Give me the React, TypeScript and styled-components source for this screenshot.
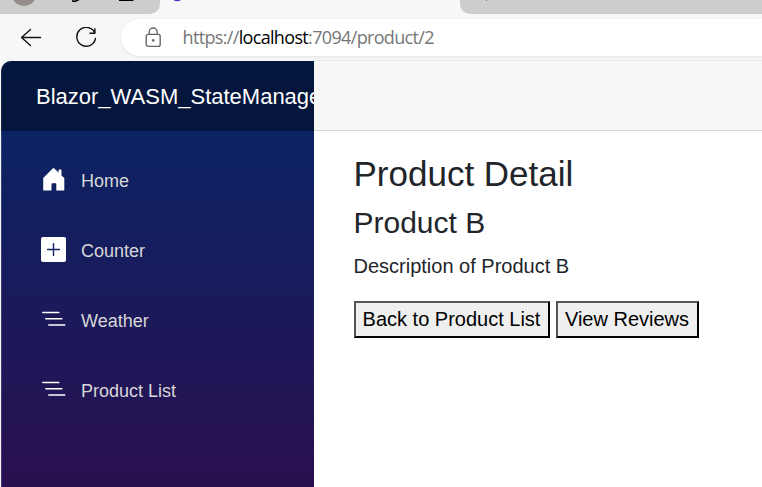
import React from 'react';
import styled, { createGlobalStyle } from 'styled-components';

const GlobalStyle = createGlobalStyle`
  * { box-sizing: border-box; }
  html, body { margin: 0; background: #f7f7f7; overflow: hidden; }
  body { font-family: 'Liberation Sans', Arial, sans-serif; color: #212529; }
`;

const Window = styled.div`
  width: 762px;
  height: 487px;
  display: flex;
  flex-direction: column;
  overflow: hidden;
`;

const TabStrip = styled.div`
  height: 14px;
  flex: none;
  display: flex;
  background: #f7f7f7;
`;

const TabActions = styled.div`
  width: 160px;
  background: #cdcdcd;
  border-bottom-right-radius: 10px;
  svg { display: block; }
`;

const ActiveTab = styled.div`
  width: 300px;
  svg { display: block; }
`;

const InactiveTab = styled.div`
  flex: 1;
  background: #cdcdcd;
  border-bottom-left-radius: 10px;
  svg { display: block; }
`;

const Toolbar = styled.div`
  height: 47px;
  flex: none;
  display: flex;
  align-items: flex-start;
  padding: 5px 0 0 20px;
  background: #f7f7f7;
`;

const ToolButton = styled.span<{ $gap: number }>`
  display: flex;
  width: 22px;
  height: 37px;
  align-items: center;
  margin-right: ${(p) => p.$gap}px;
  svg { display: block; flex: none; }
`;

const AddressBar = styled.div`
  flex: 1;
  height: 37px;
  display: flex;
  align-items: center;
  padding-left: 24px;
  background: #fff;
  border-radius: 19px 0 0 19px;
  box-shadow: 0 1px 3px rgba(0, 0, 0, 0.09);
  svg { display: block; flex: none; }
`;

const Url = styled.span`
  margin: -1px 0 0 19.5px;
  font: 400 18px/24px 'Open Sans', 'Noto Sans', sans-serif;
  letter-spacing: -0.66px;
  color: #767676;
  white-space: nowrap;
  b { font-weight: 400; color: #000; }
`;

const Page = styled.div`
  flex: 1;
  display: flex;
  min-height: 0;
  padding-left: 1px;
`;

const Sidebar = styled.aside`
  width: 313px;
  flex: none;
  overflow: hidden;
  border-top-left-radius: 10px;
  background: linear-gradient(180deg, rgb(5, 39, 103) 0, #3a0647 610px);
  box-shadow: inset 1px 0 rgba(255, 255, 255, 0.15);
`;

const Brand = styled.div`
  height: 70px;
  padding-left: 35px;
  background: rgba(0, 0, 0, 0.4);
  color: #fff;
  font-size: 22px;
  line-height: 72px;
  white-space: nowrap;
`;

const Nav = styled.nav`
  padding: 20px 0 0 40px;
`;

const NavItem = styled.a`
  height: 60px;
  margin-bottom: 10px;
  display: flex;
  align-items: center;
  gap: 15px;
  color: #d7d7d7;
  font-size: 18px;
  svg { display: block; flex: none; margin-bottom: 3px; color: #fff; }
`;

const Main = styled.main`
  flex: 1;
  background: #fff;
`;

const TopRow = styled.div`
  height: 70px;
  background: #f7f7f7;
  border-bottom: 1px solid #d6d5d5;
  box-shadow: 0 -1px #eaeaea;
`;

const Article = styled.article`
  padding: 22px 0 0 39.5px;
`;

const Title = styled.h1`
  margin: 0 0 10px;
  font-size: 35px;
  font-weight: 400;
  line-height: 42px;
`;

const Subtitle = styled.h3`
  margin: 0 0 10px;
  font-size: 30px;
  font-weight: 400;
  line-height: 36px;
`;

const Description = styled.p`
  margin: 0 0 20px;
  font-size: 20px;
  line-height: 30px;
`;

const Actions = styled.div`
  display: flex;
  gap: 6px;
`;

const Button = styled.button<{ $width: number }>`
  width: ${(p) => p.$width}px;
  height: 37px;
  padding: 0 0 2px;
  border: 2px solid;
  border-color: #555 #000 #000 #555;
  background: #efefef;
  color: #000;
  font: 20px/30px 'Liberation Sans', Arial, sans-serif;
  white-space: nowrap;
`;

const HomeIcon = () => (
  <svg width="25" height="25" viewBox="0 0 25 25" fill="currentColor">
    <path d="M12 1.3q.5-.4 1 0L17.6 5.4V3.2q0-.6.6-.6h1.7q.6 0 .6.6v5.2l2.8 2.6V22.9q0 .7-.7.7h-6.8q-.5 0-.5-.6v-6q0-.8-.8-.8h-3.2q-.8 0-.8.8v6q0 .6-.5.6H2.9q-.7 0-.7-.7V11Z" />
  </svg>
);

const PlusIcon = () => (
  <svg width="25" height="25" viewBox="0 0 25 25">
    <rect width="25" height="25" rx="2" fill="currentColor" />
    <path d="M12.5 6.6v11.8M6.6 12.5h11.8" stroke="#152060" strokeWidth="1.4" strokeLinecap="round" />
  </svg>
);

const ListIcon = () => (
  <svg width="25" height="25" viewBox="0 0 25 25" fill="none" stroke="currentColor" strokeWidth="1.5" strokeLinecap="round">
    <path d="M1.8 5.4H17.8M4.8 11.8H20.8M7.8 18H23.8" />
  </svg>
);

const App = () => (
  <Window>
    <GlobalStyle />
    <TabStrip>
      <TabActions>
        <svg width="160" height="14" fill="none">
          <ellipse cx="24" cy="-3" rx="11" ry="9" fill="#928d8a" />
          <path d="M73 0v1.2h2.5L80-1" stroke="#000" strokeWidth="1.5" />
          <path d="M119 0h14.5" stroke="#000" strokeWidth="2" />
        </svg>
      </TabActions>
      <ActiveTab>
        <svg width="40" height="14">
          <circle cx="17.3" cy="-5" r="6.2" fill="#512bd4" />
        </svg>
      </ActiveTab>
      <InactiveTab>
        <svg width="40" height="14">
          <path d="M26.5 0v1" stroke="#777" />
        </svg>
      </InactiveTab>
    </TabStrip>
    <Toolbar>
      <ToolButton $gap={34}>
        <svg width="22" height="22" viewBox="0 0 22 22" fill="none" stroke="#111" strokeWidth="1.35" strokeLinecap="round" strokeLinejoin="round">
          <path d="M20.5 10.5H1.5M10.5 2.5l-9 8 9 8" />
        </svg>
      </ToolButton>
      <ToolButton $gap={23}>
        <svg width="22" height="22" viewBox="0 0 22 22" fill="none" stroke="#111" strokeWidth="1.4" strokeLinecap="round" strokeLinejoin="round">
          <path d="M18.9 6.2A9.4 9.4 0 1 0 19.5 11.4M18.9 1.7V6.2H14" />
        </svg>
      </ToolButton>
      <AddressBar>
        <svg width="18" height="22" viewBox="0 0 18 22" fill="none" stroke="#666" strokeWidth="1.4">
          <rect x="1.2" y="7.4" width="14" height="12" rx="2" />
          <path d="M4.2 7.4V5a4 4 0 0 1 8 0v2.4" />
          <circle cx="8.2" cy="13.4" r="1.3" fill="#666" stroke="none" />
        </svg>
        <Url>https://<b>localhost</b>:7094/product/2</Url>
      </AddressBar>
    </Toolbar>
    <Page>
      <Sidebar>
        <Brand>Blazor_WASM_StateManagement</Brand>
        <Nav>
          <NavItem><HomeIcon />Home</NavItem>
          <NavItem><PlusIcon />Counter</NavItem>
          <NavItem><ListIcon />Weather</NavItem>
          <NavItem><ListIcon />Product List</NavItem>
        </Nav>
      </Sidebar>
      <Main>
        <TopRow />
        <Article>
          <Title>Product Detail</Title>
          <Subtitle>Product B</Subtitle>
          <Description>Description of Product B</Description>
          <Actions>
            <Button $width={196}>Back to Product List</Button>
            <Button $width={143}>View Reviews</Button>
          </Actions>
        </Article>
      </Main>
    </Page>
  </Window>
);

export default App;
